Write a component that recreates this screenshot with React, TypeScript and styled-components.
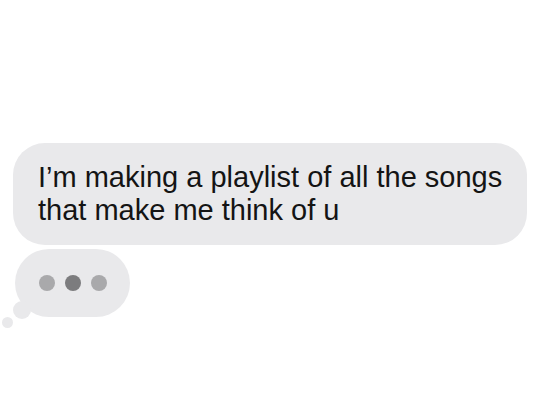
import styled, { createGlobalStyle } from 'styled-components';

const GlobalStyle = createGlobalStyle`
  html, body {
    margin: 0;
    padding: 0;
    background: #ffffff;
  }
  body {
    font-family: "Liberation Sans", Arial, sans-serif;
  }
`;

const Thread = styled.main`
  width: 540px;
  height: 408px;
  box-sizing: border-box;
  padding: 143px 13px 0 13px;
  display: flex;
  flex-direction: column;
  align-items: flex-start;
  gap: 4px;
`;

const Bubble = styled.div`
  box-sizing: border-box;
  width: 514px;
  min-height: 102px;
  padding: 18px 12px 17px 25px;
  border-radius: 32px;
  background: #e9e9eb;
  color: #141414;
  font-size: 29px;
  line-height: 33px;
  white-space: nowrap;
`;

const TypingWrap = styled.div`
  position: relative;
  margin-left: 2px;
`;

const TypingBubble = styled.div`
  width: 115px;
  height: 68px;
  border-radius: 34px;
  background: #e9e9eb;
  display: flex;
  align-items: center;
  justify-content: center;
  gap: 10px;
`;

const Dot = styled.span<{ $shade: string }>`
  width: 16px;
  height: 16px;
  border-radius: 50%;
  background: ${(p) => p.$shade};
`;

const TailCircle = styled.span<{ $size: number; $left: number; $top: number }>`
  position: absolute;
  width: ${(p) => p.$size}px;
  height: ${(p) => p.$size}px;
  left: ${(p) => p.$left}px;
  top: ${(p) => p.$top}px;
  border-radius: 50%;
  background: #e9e9eb;
`;

export default function App() {
  return (
    <>
      <GlobalStyle />
      <Thread>
        <Bubble>
          I’m making a playlist of all the songs
          <br />
          that make me think of u
        </Bubble>
        <TypingWrap>
          <TypingBubble>
            <Dot $shade="#a9a9ab" />
            <Dot $shade="#7c7c7e" />
            <Dot $shade="#a9a9ab" />
          </TypingBubble>
          <TailCircle $size={18} $left={-2} $top={52} />
          <TailCircle $size={11} $left={-13} $top={68} />
        </TypingWrap>
      </Thread>
    </>
  );
}
